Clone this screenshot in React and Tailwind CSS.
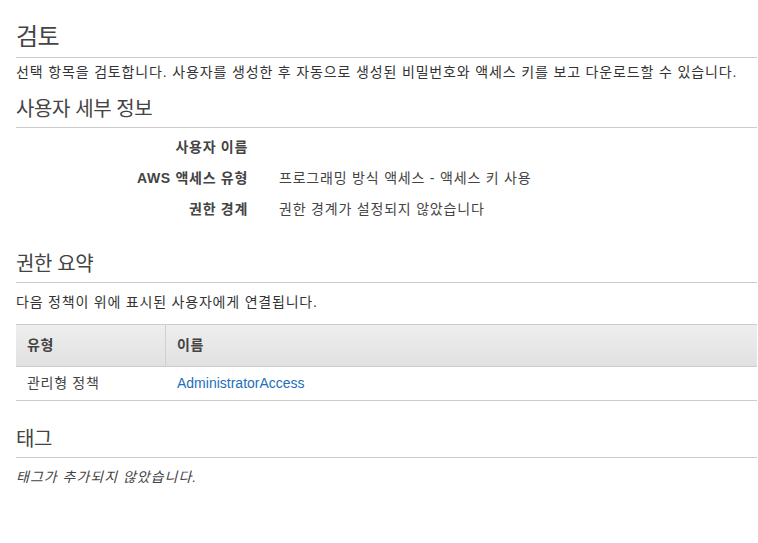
export default function App() {
  const font = { fontFamily: '"Liberation Sans", "Noto Sans CJK KR", sans-serif' };

  const details = [
    { label: "사용자 이름", value: "" },
    { label: "AWS 액세스 유형", value: "프로그래밍 방식 액세스 - 액세스 키 사용" },
    { label: "권한 경계", value: "권한 경계가 설정되지 않았습니다" },
  ];

  return (
    <div className="min-h-screen bg-white pl-4 pr-px text-[#333]" style={font}>
      {/* Title */}
      <h1 className="pt-[22px] pb-[6px] text-[24px] leading-[29px] tracking-[-0.5px] text-[#444] border-b border-[#ccc]">검토</h1>
      <p className="mt-[4px] text-[14px] leading-[20px] tracking-[0.85px] text-[#333]">
        선택 항목을 검토합니다. 사용자를 생성한 후 자동으로 생성된 비밀번호와 액세스 키를 보고 다운로드할 수 있습니다.
      </p>

      {/* User details */}
      <h2 className="mt-[14px] pb-[5px] text-[20px] leading-[26px] tracking-[-0.4px] text-[#444] border-b border-[#ccc]">사용자 세부 정보</h2>
      <div className="mt-[4px]">
        {details.map((d) => (
          <div key={d.label} className="flex h-[31px] items-center text-[14px] tracking-[0.8px]">
            <div className="w-[232px] text-right font-bold tracking-[0.7px] text-[#444]">{d.label}</div>
            <div className="ml-[31px] text-[#444]">{d.value}</div>
          </div>
        ))}
      </div>

      {/* Permissions summary */}
      <h2 className="mt-[26px] pb-[5px] text-[20px] leading-[26px] tracking-[-0.4px] text-[#444] border-b border-[#ccc]">권한 요약</h2>
      <p className="mt-[9px] text-[14px] leading-[20px] tracking-[0.8px] text-[#333]">다음 정책이 위에 표시된 사용자에게 연결됩니다.</p>
      <div className="mt-[12px] text-[14px]">
        <div className="flex h-[43px] items-center border-y border-[#ccc] bg-gradient-to-b from-[#eeeeee] to-[#e1e1e1] font-bold tracking-[0.7px] text-[#444]">
          <div className="flex h-full w-[150px] items-center border-r border-[#d0d0d0] pl-[11px]">유형</div>
          <div className="pl-[11px]">이름</div>
        </div>
        <div className="flex h-[34px] items-center border-b border-[#ccc]">
          <div className="w-[150px] pl-[11px] tracking-[0.7px] text-[#444]">관리형 정책</div>
          <div className="pl-[11px] text-[#1e6fb8]">AdministratorAccess</div>
        </div>
      </div>

      {/* Tags */}
      <h2 className="mt-[25px] pb-[5px] text-[20px] leading-[26px] tracking-[-0.4px] text-[#444] border-b border-[#ccc]">태그</h2>
      <p className="mt-[9px] text-[14px] leading-[20px] italic tracking-[1px] text-[#444]">태그가 추가되지 않았습니다.</p>
    </div>
  );
}
